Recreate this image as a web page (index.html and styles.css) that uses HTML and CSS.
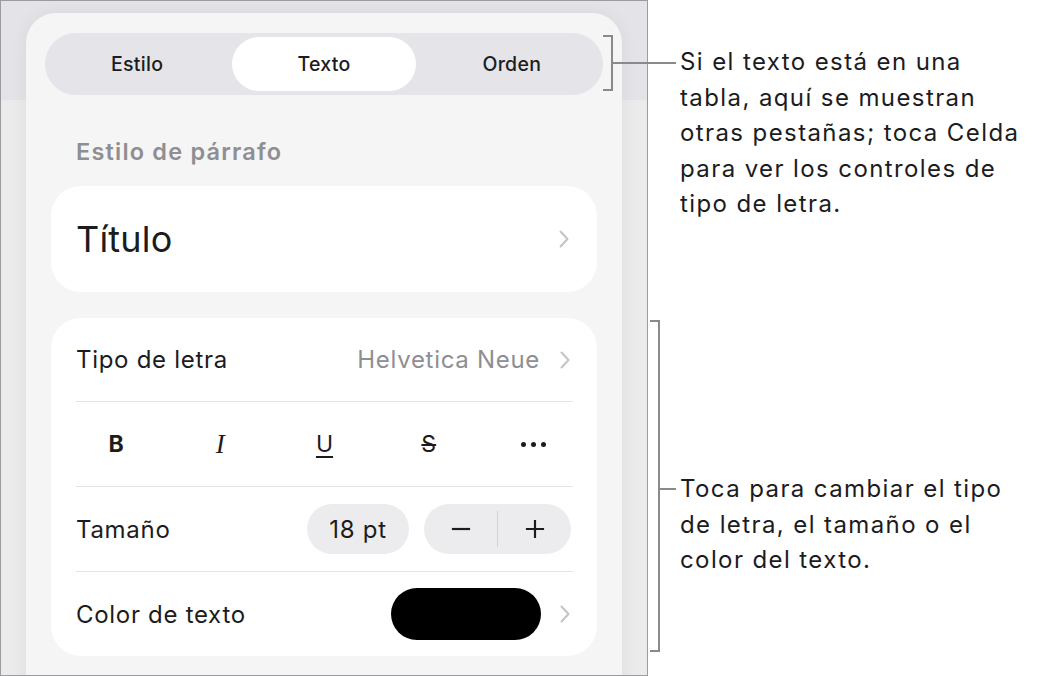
FILE: index.html
```html
<!DOCTYPE html>
<html lang="es">
<head>
  <meta charset="UTF-8">
  <title>Texto</title>
  <link rel="stylesheet" href="styles.css">
</head>
<body>
  <div class="page">

    <!-- Screenshot of the format panel -->
    <div class="screen">
      <div class="panel">
        <div class="tabs">
          <div class="tab">Estilo</div>
          <div class="tab active">Texto</div>
          <div class="tab">Orden</div>
        </div>

        <div class="section-label">Estilo de párrafo</div>

        <div class="card style-card">
          <span class="style-name">Título</span>
          <svg class="chevron" viewBox="0 0 10 18"><path d="M1.5 1.5 L8.5 9 L1.5 16.5"/></svg>
        </div>

        <div class="card">
          <div class="row">
            <span class="row-label">Tipo de letra</span>
            <span class="row-value">Helvetica Neue</span>
            <svg class="chevron" viewBox="0 0 10 18"><path d="M1.5 1.5 L8.5 9 L1.5 16.5"/></svg>
          </div>
          <div class="row format-row">
            <span class="fmt fmt-bold">B</span>
            <span class="fmt fmt-italic">I</span>
            <span class="fmt fmt-underline">U</span>
            <span class="fmt fmt-strike">S</span>
            <span class="fmt fmt-more"><i></i><i></i><i></i></span>
          </div>
          <div class="row">
            <span class="row-label">Tamaño</span>
            <span class="size-pill">18 pt</span>
            <div class="stepper">
              <span class="step">
                <svg viewBox="0 0 22 22"><path d="M1 11 H21"/></svg>
              </span>
              <span class="step-divider"></span>
              <span class="step">
                <svg viewBox="0 0 22 22"><path d="M1 11 H21 M11 1 V21"/></svg>
              </span>
            </div>
          </div>
          <div class="row">
            <span class="row-label">Color de texto</span>
            <span class="swatch"></span>
            <svg class="chevron" viewBox="0 0 10 18"><path d="M1.5 1.5 L8.5 9 L1.5 16.5"/></svg>
          </div>
        </div>
      </div>
    </div>

    <!-- Callouts -->
    <div class="callout callout-tabs">
      <div class="bracket"></div>
      <div class="leader"></div>
      <p class="note">Si el texto está en una<br>tabla, aquí se muestran<br>otras pestañas; toca Celda<br>para ver los controles de<br>tipo de letra.</p>
    </div>

    <div class="callout callout-font">
      <div class="bracket"></div>
      <div class="leader"></div>
      <p class="note">Toca para cambiar el tipo<br>de letra, el tamaño o el<br>color del texto.</p>
    </div>

  </div>
</body>
</html>
```

FILE: styles.css
```css
body {
  margin: 0;
  background: #ffffff;
  font-family: Inter, "Noto Sans", sans-serif;
  color: #1c1c1e;
}

.page {
  position: relative;
  width: 1037px;
  height: 676px;
  overflow: hidden;
}

/* Screenshot frame */
.screen {
  box-sizing: border-box;
  width: 648px;
  height: 676px;
  border: 1px solid #9c9c9e;
  background: linear-gradient(#e4e4e8 0, #e4e4e8 99px, #ebebec 99px);
  overflow: hidden;
}

.panel {
  box-sizing: border-box;
  width: 596px;
  height: 700px;
  margin: 12px 0 0 25px;
  padding: 20px 19px;
  background: #f5f5f6;
  border-radius: 30px;
  box-shadow: 0 0 18px rgba(0, 0, 0, 0.06);
}

/* Segmented control */
.tabs {
  display: grid;
  grid-template-columns: repeat(3, 1fr);
  height: 62px;
  padding: 4px;
  box-sizing: border-box;
  border-radius: 31px;
  background: #e4e4e9;
}

.tab {
  display: flex;
  align-items: center;
  justify-content: center;
  border-radius: 27px;
  font-size: 19.5px;
  font-weight: 500;
  letter-spacing: 0.3px;
}

.tab:first-child {
  padding-right: 7px;
}

.tab:last-child {
  padding-left: 9px;
}

.tab.active {
  background: #ffffff;
}

.section-label {
  margin: 42px 0 19px 31px;
  font-size: 23.5px;
  line-height: 30px;
  font-weight: 600;
  letter-spacing: 1.2px;
  color: #8e8e93;
}

/* Cards */
.card {
  margin: 0 6px;
  background: #ffffff;
  border-radius: 30px;
}

.style-card {
  display: flex;
  align-items: center;
  justify-content: space-between;
  height: 106px;
  padding: 0 28px 0 25px;
  margin-bottom: 26px;
}

.style-name {
  font-size: 36px;
  letter-spacing: 0.2px;
}

.chevron {
  width: 10px;
  height: 18px;
  flex: none;
}

.chevron path {
  fill: none;
  stroke: #c4c4c7;
  stroke-width: 2;
  stroke-linecap: round;
  stroke-linejoin: round;
}

.card .row {
  display: flex;
  align-items: center;
  height: 84px;
  margin: 0 24px 0 25px;
  font-size: 24px;
  letter-spacing: 0.7px;
}

.card .row + .row {
  border-top: 1px solid #e4e4e6;
}

.card .row:first-child {
  height: 83px;
}

.row-label {
  flex: 1;
}

.row-value {
  margin-right: 20px;
  color: #8e8e93;
}

.row .chevron {
  margin-right: 3px;
}

/* Bold / italic / underline / strike / more */
.format-row {
  justify-content: space-between;
}

.fmt {
  display: flex;
  align-items: center;
  justify-content: center;
  width: 80px;
  font-size: 23px;
  letter-spacing: 0;
}

.fmt-bold {
  font-weight: 700;
}

.fmt-italic {
  font-family: "Liberation Serif", serif;
  font-style: italic;
  font-size: 27px;
}

.fmt-underline {
  text-decoration: underline;
  text-decoration-thickness: 2px;
  text-underline-offset: 4px;
}

.fmt-strike {
  text-decoration: line-through;
  text-decoration-thickness: 2px;
}

.fmt-more {
  gap: 5px;
}

.fmt-more i {
  width: 5px;
  height: 5px;
  border-radius: 50%;
  background: #1c1c1e;
}

/* Size controls */
.size-pill {
  display: flex;
  align-items: center;
  justify-content: center;
  width: 102px;
  height: 50px;
  border-radius: 25px;
  background: #ececee;
}

.stepper {
  display: flex;
  align-items: center;
  width: 147px;
  height: 50px;
  margin: 0 2px 0 15px;
  border-radius: 25px;
  background: #ececee;
}

.step {
  flex: 1;
  display: flex;
  justify-content: center;
}

.step svg {
  width: 20px;
  height: 20px;
}

.step path {
  stroke: #1c1c1e;
  stroke-width: 2.4;
  fill: none;
}

.step-divider {
  width: 1px;
  height: 36px;
  background: #d4d4d7;
}

.swatch {
  width: 150px;
  height: 52px;
  margin-right: 19px;
  border-radius: 26px;
  background: #000000;
}

/* Annotation callouts laid over the screenshot */
.callout {
  position: absolute;
  display: flex;
  align-items: flex-start;
}

.callout-tabs {
  left: 603px;
  top: 35px;
}

.callout-font {
  left: 650px;
  top: 320px;
}

.bracket {
  box-sizing: border-box;
  width: 10px;
  border: 2px solid #8a8a8c;
  border-left: none;
}

.leader {
  height: 2px;
  background: #8a8a8c;
}

.note {
  margin: 0 0 0 4px;
  font-size: 24px;
  line-height: 35.5px;
  letter-spacing: 1.4px;
  white-space: nowrap;
  color: #1c1c1e;
}

.callout-tabs .bracket {
  height: 56px;
}

.callout-tabs .leader {
  width: 63px;
  margin-top: 27px;
}

.callout-tabs .note {
  margin-top: 9px;
}

.callout-font .bracket {
  height: 332px;
}

.callout-font .leader {
  width: 16px;
  margin-top: 168px;
}

.callout-font .note {
  margin-top: 151px;
}
```
